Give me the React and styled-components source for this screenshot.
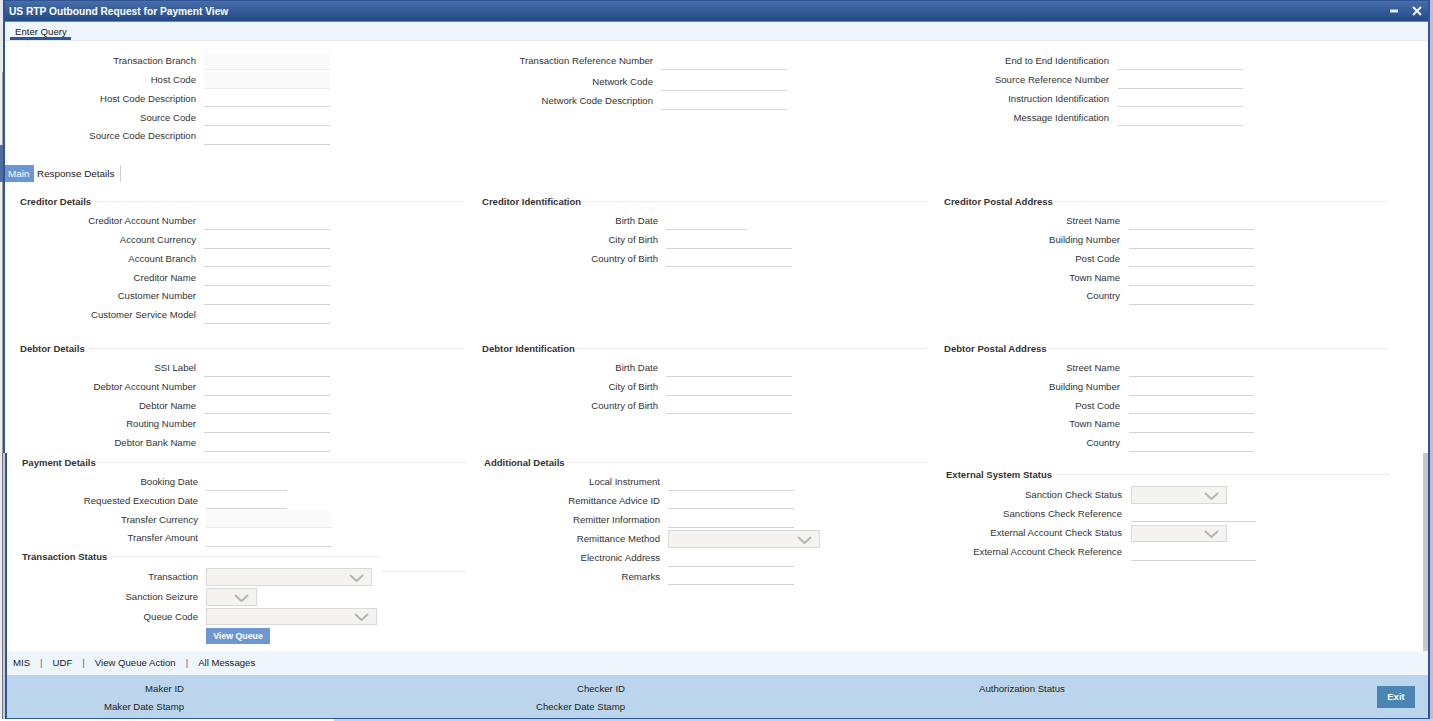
import styled, { createGlobalStyle } from "styled-components"

const GlobalStyle = createGlobalStyle`
    html, body {
        margin: 0;
        padding: 0;
        height: 100%;
        overflow: hidden;
        background: #ffffff;
    }
    body {
        font-family: "Liberation Sans", Arial, sans-serif;
        font-size: 9.6px;
        color: #333333;
    }
`

const Desktop = styled.div`
    position: relative;
    width: 1433px;
    height: 721px;
    display: flex;
    flex-direction: column;
    background: linear-gradient(to right, #ffffff 334px, #b8d4ee 334px);
`

const WindowRow = styled.div`
    display: flex;
    height: 719px;
    background: #b3c2d9;
`

const LeftEdge = styled.div`
    width: 3px;
    flex: none;
    background:
        linear-gradient(#4f6c9c, #4f6c9c) 0 145px / 3px 37px no-repeat,
        linear-gradient(#e6e8ec, #e6e8ec) 0 0 / 3px 72px no-repeat,
        linear-gradient(to right, #eceef1 2px, #9a9ca2 2px);
`

const BackWindowEdge = styled.div`
    position: absolute;
    top: 453px;
    left: 0;
    width: 7px;
    height: 266px;
    background: linear-gradient(
        to right,
        #eceef1 2px,
        #6f7480 2px,
        #6f7480 3px,
        #c8ccd2 3px,
        #c8ccd2 5px,
        #2f5597 5px
    );
`

const Window = styled.div`
    position: relative;
    width: 1427px;
    flex: none;
    display: flex;
    flex-direction: column;
    box-sizing: border-box;
    background: #ffffff;
    border-left: 2px solid #2f5597;
    border-right: 2px solid #2f5597;
    border-bottom: 1px solid #2f5597;
`

const TitleBar = styled.header`
    height: 22px;
    flex: none;
    display: flex;
    align-items: center;
    box-sizing: border-box;
    padding: 0 6px 0 4px;
    background: linear-gradient(to bottom, #46709f 0, #4469a5 2px, #234a88 100%);
    border-top: 1px solid #2f5597;
    border-bottom: 1px solid #6f85a6;
`

const WindowTitle = styled.h1`
    flex: 1;
    margin: 0;
    color: #ffffff;
    font-size: 10.2px;
    font-weight: 700;
`

const WindowButton = styled.button`
    display: grid;
    place-items: center;
    width: 10px;
    height: 11px;
    margin-left: 13px;
    padding: 0;
    border: 0;
    background: none;
`

const Toolbar = styled.div`
    height: 19px;
    flex: none;
    display: flex;
    padding-left: 5px;
    box-sizing: border-box;
    background: #eef5fd;
    border-bottom: 1px solid #e4e8ee;
`

const ToolTab = styled.div`
    height: 18px;
    box-sizing: border-box;
    padding: 3px 4px 0 5px;
    display: flex;
    align-items: center;
    color: #222222;
    border-bottom: 3px solid #2f5597;
`

const Main = styled.main`
    flex: 1;
    min-height: 0;
    overflow: hidden;
`

const Scrollbar = styled.div`
    position: absolute;
    top: 453px;
    right: 0;
    width: 5px;
    height: 198px;
    background: #c8c8c8;
`

const Columns = styled.div`
    display: flex;
    padding-left: ${p => p.$left}px;
    margin-top: ${p => p.$top || 0}px;
`

const Column = styled.div`
    width: ${p => p.$w}px;
    flex: none;
    margin-right: ${p => p.$gap || 0}px;
    padding-top: ${p => p.$top || 0}px;
`

const Field = styled.div`
    display: flex;
    align-items: flex-end;
    height: ${p => p.$h}px;
`

const Label = styled.label`
    width: ${p => p.$w || 176}px;
    flex: none;
    height: ${p => (p.$low ? 15 : 17)}px;
    line-height: ${p => (p.$low ? 13 : 15)}px;
    text-align: right;
    white-space: nowrap;
`

const TextInput = styled.div`
    width: ${p => p.$w}px;
    height: ${p => (p.$off ? 17 : 16)}px;
    margin-left: ${p => p.$gap || 8}px;
    flex: none;
    box-sizing: border-box;
    background: ${p => (p.$off ? "#fafafa" : "transparent")};
    border-bottom: 1px solid ${p => (p.$off ? "#ececec" : "#d3d3d3")};
`

const SelectBox = styled.div`
    width: ${p => p.$w}px;
    height: ${p => p.$h}px;
    margin-left: ${p => p.$gap || 8}px;
    flex: none;
    box-sizing: border-box;
    display: flex;
    align-items: center;
    justify-content: flex-end;
    padding: 1px 7px 0 0;
    background: #f4f3ef;
    border: 1px solid #d9d9d9;
`

const SectionHead = styled.div`
    display: flex;
    align-items: center;
    height: 17px;
`

const SectionTitle = styled.h2`
    align-self: flex-start;
    margin: 0 1px 0 0;
    font-size: 9.55px;
    line-height: 18px;
    font-weight: 700;
    color: #333333;
    white-space: nowrap;
`

const SectionRule = styled.span`
    flex: 1;
    height: 1px;
    background: #ececec;
`

const TabBar = styled.div`
    display: flex;
    height: 17px;
    margin-top: 20px;
`

const Tab = styled.div`
    display: flex;
    align-items: center;
    box-sizing: border-box;
    width: ${p => (p.$active ? 29 : 87)}px;
    font-size: 9.9px;
    padding-left: 3px;
    background: ${p => (p.$active ? "#6a96d3" : "transparent")};
    color: ${p => (p.$active ? "#ffffff" : "#222222")};
    border-right: ${p => (p.$active ? "0" : "1px solid #cfcfcf")};
`

const StatusBlock = styled.div`
    display: flex;
    margin-top: 1px;
`

const StatusFields = styled.div`
    width: 359px;
    flex: none;
`

const StatusTail = styled.span`
    flex: 1;
    height: 1px;
    margin-top: 23px;
    background: #ececec;
`

const QueueButton = styled.button`
    display: block;
    width: 64px;
    height: 16px;
    margin: 3px 0 0 184px;
    padding: 0;
    border: 0;
    background: #6d97d3;
    color: #ffffff;
    font: 700 8.8px "Liberation Sans", Arial, sans-serif;
`

const LinkBar = styled.nav`
    height: 24px;
    flex: none;
    display: flex;
    align-items: center;
    box-sizing: border-box;
    padding: 0 0 2px 8px;
    background: #eef5fd;
    color: #222222;
`

const Pipe = styled.span`
    margin: 0 10px;
    color: #666666;
`

const InfoBar = styled.footer`
    height: 43px;
    flex: none;
    display: flex;
    box-sizing: border-box;
    padding-top: 6px;
    background: #bbd6ec;
    color: #222222;
`

const InfoColumn = styled.div`
    width: ${p => p.$w}px;
    flex: none;
    margin-left: ${p => p.$left || 0}px;
    text-align: ${p => p.$align || "right"};
`

const InfoLine = styled.div`
    height: 18px;
    line-height: 16px;
    white-space: nowrap;
`

const ExitButton = styled.button`
    width: 38px;
    height: 22px;
    margin: 5px 13px 0 auto;
    padding: 0 0 2px;
    border: 0;
    background: #4a85b4;
    color: #ffffff;
    font: 700 9.5px "Liberation Sans", Arial, sans-serif;
`

const Chevron = () => (
    <svg width="15" height="8" viewBox="0 0 15 8">
        <path d="M1 1l6.5 6L14 1" fill="none" stroke="#b2b6b6" strokeWidth="2" />
    </svg>
)

const FieldList = ({ fields, labelWidth, gap, inputWidth = 126 }) =>
    fields.map(f => (
        <Field key={f.label} $h={f.h}>
            <Label $w={labelWidth} $low={f.low}>{f.label}</Label>
            {f.select ? (
                <SelectBox $w={f.w} $h={f.sh || 18} $gap={gap}>
                    <Chevron />
                </SelectBox>
            ) : (
                <TextInput $w={f.w || inputWidth} $off={f.off} $gap={gap} />
            )}
        </Field>
    ))

const Section = ({ title, fields, w = 444, gap = 18, top, labelWidth, fieldGap, inputWidth }) => (
    <Column $w={w} $gap={gap} $top={top}>
        <SectionHead>
            <SectionTitle>{title}</SectionTitle>
            <SectionRule />
        </SectionHead>
        <FieldList fields={fields} labelWidth={labelWidth} gap={fieldGap} inputWidth={inputWidth} />
    </Column>
)

const headerCols = [
    {
        w: 457,
        fields: [
            { label: "Transaction Branch", h: 17, off: true },
            { label: "Host Code", h: 19, off: true },
            { label: "Host Code Description", h: 18, low: true },
            { label: "Source Code", h: 19, low: true },
            { label: "Source Code Description", h: 19 },
        ],
    },
    {
        w: 456,
        fields: [
            { label: "Transaction Reference Number", h: 17 },
            { label: "Network Code", h: 21 },
            { label: "Network Code Description", h: 19 },
        ],
    },
    {
        w: 456,
        gap: 9,
        inputWidth: 125,
        fields: [
            { label: "End to End Identification", h: 17 },
            { label: "Source Reference Number", h: 19 },
            { label: "Instruction Identification", h: 18, low: true },
            { label: "Message Identification", h: 19, low: true },
        ],
    },
]

const creditorRows = [
    {
        title: "Creditor Details",
        fields: [
            { label: "Creditor Account Number", h: 20 },
            { label: "Account Currency", h: 19 },
            { label: "Account Branch", h: 18, low: true },
            { label: "Creditor Name", h: 19, low: true },
            { label: "Customer Number", h: 19 },
            { label: "Customer Service Model", h: 19 },
        ],
    },
    {
        title: "Creditor Identification",
        fields: [
            { label: "Birth Date", h: 20, w: 81 },
            { label: "City of Birth", h: 19 },
            { label: "Country of Birth", h: 18, low: true },
        ],
    },
    {
        title: "Creditor Postal Address",
        fieldGap: 9,
        inputWidth: 125,
        fields: [
            { label: "Street Name", h: 20 },
            { label: "Building Number", h: 19 },
            { label: "Post Code", h: 18, low: true },
            { label: "Town Name", h: 19, low: true },
            { label: "Country", h: 19 },
        ],
    },
]

const debtorRows = [
    {
        title: "Debtor Details",
        fields: [
            { label: "SSI Label", h: 20 },
            { label: "Debtor Account Number", h: 19 },
            { label: "Debtor Name", h: 18, low: true },
            { label: "Routing Number", h: 19 },
            { label: "Debtor Bank Name", h: 19 },
        ],
    },
    {
        title: "Debtor Identification",
        fields: [
            { label: "Birth Date", h: 20 },
            { label: "City of Birth", h: 19 },
            { label: "Country of Birth", h: 18, low: true },
        ],
    },
    {
        title: "Debtor Postal Address",
        fieldGap: 9,
        inputWidth: 125,
        fields: [
            { label: "Street Name", h: 20 },
            { label: "Building Number", h: 19 },
            { label: "Post Code", h: 18, low: true },
            { label: "Town Name", h: 19 },
            { label: "Country", h: 19 },
        ],
    },
]

const paymentFields = [
    { label: "Booking Date", h: 20, w: 81 },
    { label: "Requested Execution Date", h: 18, w: 81, low: true },
    { label: "Transfer Currency", h: 19, off: true, low: true },
    { label: "Transfer Amount", h: 19 },
]

const statusFields = [
    { label: "Transaction", h: 21, select: true, w: 166 },
    { label: "Sanction Seizure", h: 20, select: true, w: 51 },
    { label: "Queue Code", h: 19, select: true, w: 171, sh: 17, low: true },
]

const additionalFields = [
    { label: "Local Instrument", h: 20 },
    { label: "Remittance Advice ID", h: 18, low: true },
    { label: "Remitter Information", h: 19, low: true },
    { label: "Remittance Method", h: 20, select: true, w: 152 },
    { label: "Electronic Address", h: 19 },
    { label: "Remarks", h: 18, low: true },
]

const externalFields = [
    { label: "Sanction Check Status", h: 21, select: true, w: 96 },
    { label: "Sanctions Check Reference", h: 18, low: true },
    { label: "External Account Check Status", h: 20, select: true, w: 96, sh: 17 },
    { label: "External Account Check Reference", h: 19 },
]

const links = ["MIS", "UDF", "View Queue Action", "All Messages"]

const App = () => (
    <Desktop>
        <GlobalStyle />
        <WindowRow>
            <LeftEdge />
            <Window>
                <TitleBar>
                    <WindowTitle>US RTP Outbound Request for Payment View</WindowTitle>
                    <WindowButton aria-label="Minimize">
                        <svg width="8" height="4" viewBox="0 0 8 4">
                            <rect y="0.5" width="8" height="3" fill="#e8eef6" />
                        </svg>
                    </WindowButton>
                    <WindowButton aria-label="Close">
                        <svg width="10" height="10" viewBox="0 0 10 10">
                            <path d="M1 1l8 8M9 1l-8 8" stroke="#f2f5fa" strokeWidth="2" />
                        </svg>
                    </WindowButton>
                </TitleBar>
                <Toolbar>
                    <ToolTab>Enter Query</ToolTab>
                </Toolbar>
                <Main>
                    <Columns $left={15} $top={12}>
                        {headerCols.map(c => (
                            <Column key={c.fields[0].label} $w={c.w}>
                                <FieldList fields={c.fields} gap={c.gap} inputWidth={c.inputWidth} />
                            </Column>
                        ))}
                    </Columns>
                    <TabBar>
                        <Tab $active>Main</Tab>
                        <Tab>Response Details</Tab>
                    </TabBar>
                    <Columns $left={15} $top={11}>
                        {creditorRows.map(s => (
                            <Section key={s.title} {...s} />
                        ))}
                    </Columns>
                    <Columns $left={15} $top={16}>
                        {debtorRows.map(s => (
                            <Section key={s.title} {...s} />
                        ))}
                    </Columns>
                    <Columns $left={17} $top={2}>
                        <Column $w={444} $gap={18}>
                            <SectionHead>
                                <SectionTitle>Payment Details</SectionTitle>
                                <SectionRule />
                            </SectionHead>
                            <FieldList fields={paymentFields} />
                            <StatusBlock>
                                <StatusFields>
                                    <SectionHead>
                                        <SectionTitle>Transaction Status</SectionTitle>
                                        <SectionRule />
                                    </SectionHead>
                                    <FieldList fields={statusFields} />
                                    <QueueButton>View Queue</QueueButton>
                                </StatusFields>
                                <StatusTail />
                            </StatusBlock>
                        </Column>
                        <Section title="Additional Details" fields={additionalFields} />
                        <Section title="External System Status" fields={externalFields} top={12} fieldGap={9} inputWidth={125} />
                    </Columns>
                </Main>
                <Scrollbar />
                <LinkBar>
                    {links.map((l, i) => (
                        <span key={l}>
                            {i > 0 && <Pipe>|</Pipe>}
                            {l}
                        </span>
                    ))}
                </LinkBar>
                <InfoBar>
                    <InfoColumn $w={179}>
                        <InfoLine>Maker ID</InfoLine>
                        <InfoLine>Maker Date Stamp</InfoLine>
                    </InfoColumn>
                    <InfoColumn $w={441}>
                        <InfoLine>Checker ID</InfoLine>
                        <InfoLine>Checker Date Stamp</InfoLine>
                    </InfoColumn>
                    <InfoColumn $w={120} $left={354} $align="left">
                        <InfoLine>Authorization Status</InfoLine>
                    </InfoColumn>
                    <ExitButton>Exit</ExitButton>
                </InfoBar>
            </Window>
        </WindowRow>
        <BackWindowEdge />
    </Desktop>
)

export default App
